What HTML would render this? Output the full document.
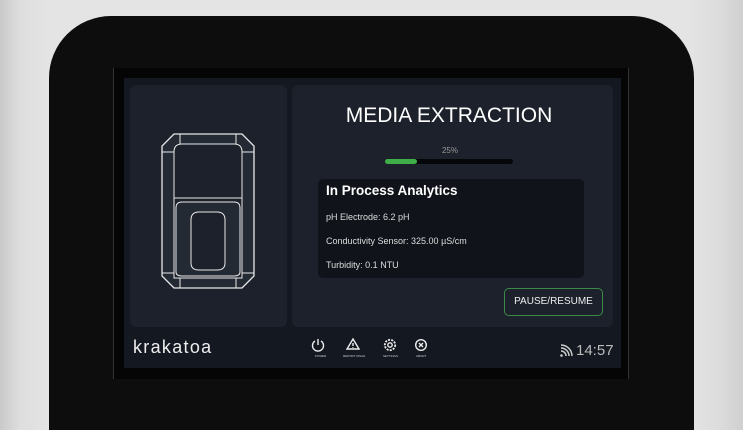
<!DOCTYPE html>
<html><head><style>
*{margin:0;padding:0;box-sizing:border-box}
html,body{width:743px;height:430px;overflow:hidden}
body{background:linear-gradient(90deg,#c9c9c9 0,#dedede 20px,#e4e4e4 50px,#e4e4e4 690px,#dcdcdc 720px,#cfcfcf 743px);position:relative;font-family:"Liberation Sans",sans-serif}
.bezel{position:absolute;left:49px;top:16px;width:645px;height:414px;background:#0d0d0d;border-radius:62px 62px 0 0}
.scr{position:absolute;left:113px;top:68px;width:516px;height:311px;background:#050505;border-left:1px solid #333;border-right:1px solid #333}
.ui{position:absolute;left:124px;top:78px;width:497px;height:290px;background:#141821}
.card{position:absolute;background:#1c212b;border-radius:6px}
.t{position:absolute;color:#fff;white-space:nowrap}
</style></head><body>
<div class="bezel"></div>
<div class="scr"></div>
<div class="ui"></div>
<div class="card" style="left:130px;top:85px;width:157px;height:242px"></div>
<div class="card" style="left:292px;top:85px;width:321px;height:242px"></div>
<svg style="position:absolute;left:160px;top:132px" width="96" height="158" viewBox="0 0 96 158" fill="none" stroke="#e8e8e8" stroke-width="1">
<path d="M14 2H82L94 14V144L82 156H14L2 144V14Z" fill="#242a34" stroke-width="1.3"/>
<path d="M22 12H74Q82 12 82 20V146H14V20Q14 12 22 12Z" fill="#1c212b"/>
<path d="M20 2V12M76 2V12M2 20H14M82 20H94M2 141H14M82 141H94M20 146V156M76 146V156"/>
<path d="M14 66H82"/>
<path d="M22 70H74Q80 70 80 76V140Q80 144 74 144H22Q16 144 16 140V76Q16 70 22 70Z" fill="#242a34"/>
<path d="M39 80H57Q65 80 65 88V131Q65 138 57 138H39Q31 138 31 131V88Q31 80 39 80Z" fill="#1c212b"/>
</svg>
<div class="t" style="left:292px;width:314px;text-align:center;top:104px;font-size:21px">MEDIA EXTRACTION</div>
<div class="t" style="left:292px;width:316px;text-align:center;top:146px;font-size:8px;color:#999">25%</div>
<div style="position:absolute;left:385px;top:159px;width:128px;height:5px;background:#05070a;border-radius:3px"></div>
<div style="position:absolute;left:385px;top:159px;width:32px;height:5px;background:#3fae48;border-radius:3px"></div>
<div style="position:absolute;left:318px;top:179px;width:266px;height:99px;background:#10131a;border-radius:5px"></div>
<div class="t" style="left:326px;top:183px;font-size:13.5px;font-weight:bold">In Process Analytics</div>
<div class="t" style="left:326px;top:212px;font-size:9px;color:#ddd">pH Electrode: 6.2 pH</div>
<div class="t" style="left:326px;top:236px;font-size:9px;color:#ddd">Conductivity Sensor: 325.00 µS/cm</div>
<div class="t" style="left:326px;top:260px;font-size:9px;color:#ddd">Turbidity: 0.1 NTU</div>
<div style="position:absolute;left:504px;top:288px;width:99px;height:28px;border:1px solid #3d8a48;border-radius:5px;color:#eee;font-size:10px;text-align:center;line-height:26px">PAUSE/RESUME</div>
<div class="t" style="left:133px;top:337px;font-size:18px;color:#eee;letter-spacing:1.3px">krakatoa</div>
<svg style="position:absolute;left:310px;top:336px" width="120" height="24" viewBox="0 0 120 24" fill="none" stroke="#eee" stroke-width="1.4">
<path d="M8 3V9M5 5A5.5 5.5 0 1 0 11 5"/>
<path d="M43 3L49 13H37Z"/><path d="M43 7V10M43 11.3V12"/>
<circle cx="80" cy="9" r="2.2"/><circle cx="80" cy="9" r="5.2" stroke-dasharray="2 1.2" stroke-width="1.8"/>
<circle cx="111" cy="9" r="5.3"/><path d="M109 7L113 11M113 7L109 11"/>
<g stroke="none" fill="#ccc" font-size="3" font-family="Liberation Sans"><text x="5" y="21">POWER</text><text x="33" y="21">REPORT ISSUE</text><text x="73" y="21">SETTINGS</text><text x="106" y="21">ABORT</text></g>
</svg>
<svg style="position:absolute;left:559px;top:344px" width="14" height="14" viewBox="0 0 14 14" fill="none" stroke="#ccc" stroke-width="1.5"><circle cx="2.5" cy="11.5" r="1.3" fill="#ccc" stroke="none"/><path d="M2 7A5 5 0 0 1 7 12M2 4A8 8 0 0 1 10 12M2 1A11 11 0 0 1 13 12"/></svg>
<div class="t" style="left:576px;top:342px;font-size:15px;color:#bbb">14:57</div>
</body></html>
